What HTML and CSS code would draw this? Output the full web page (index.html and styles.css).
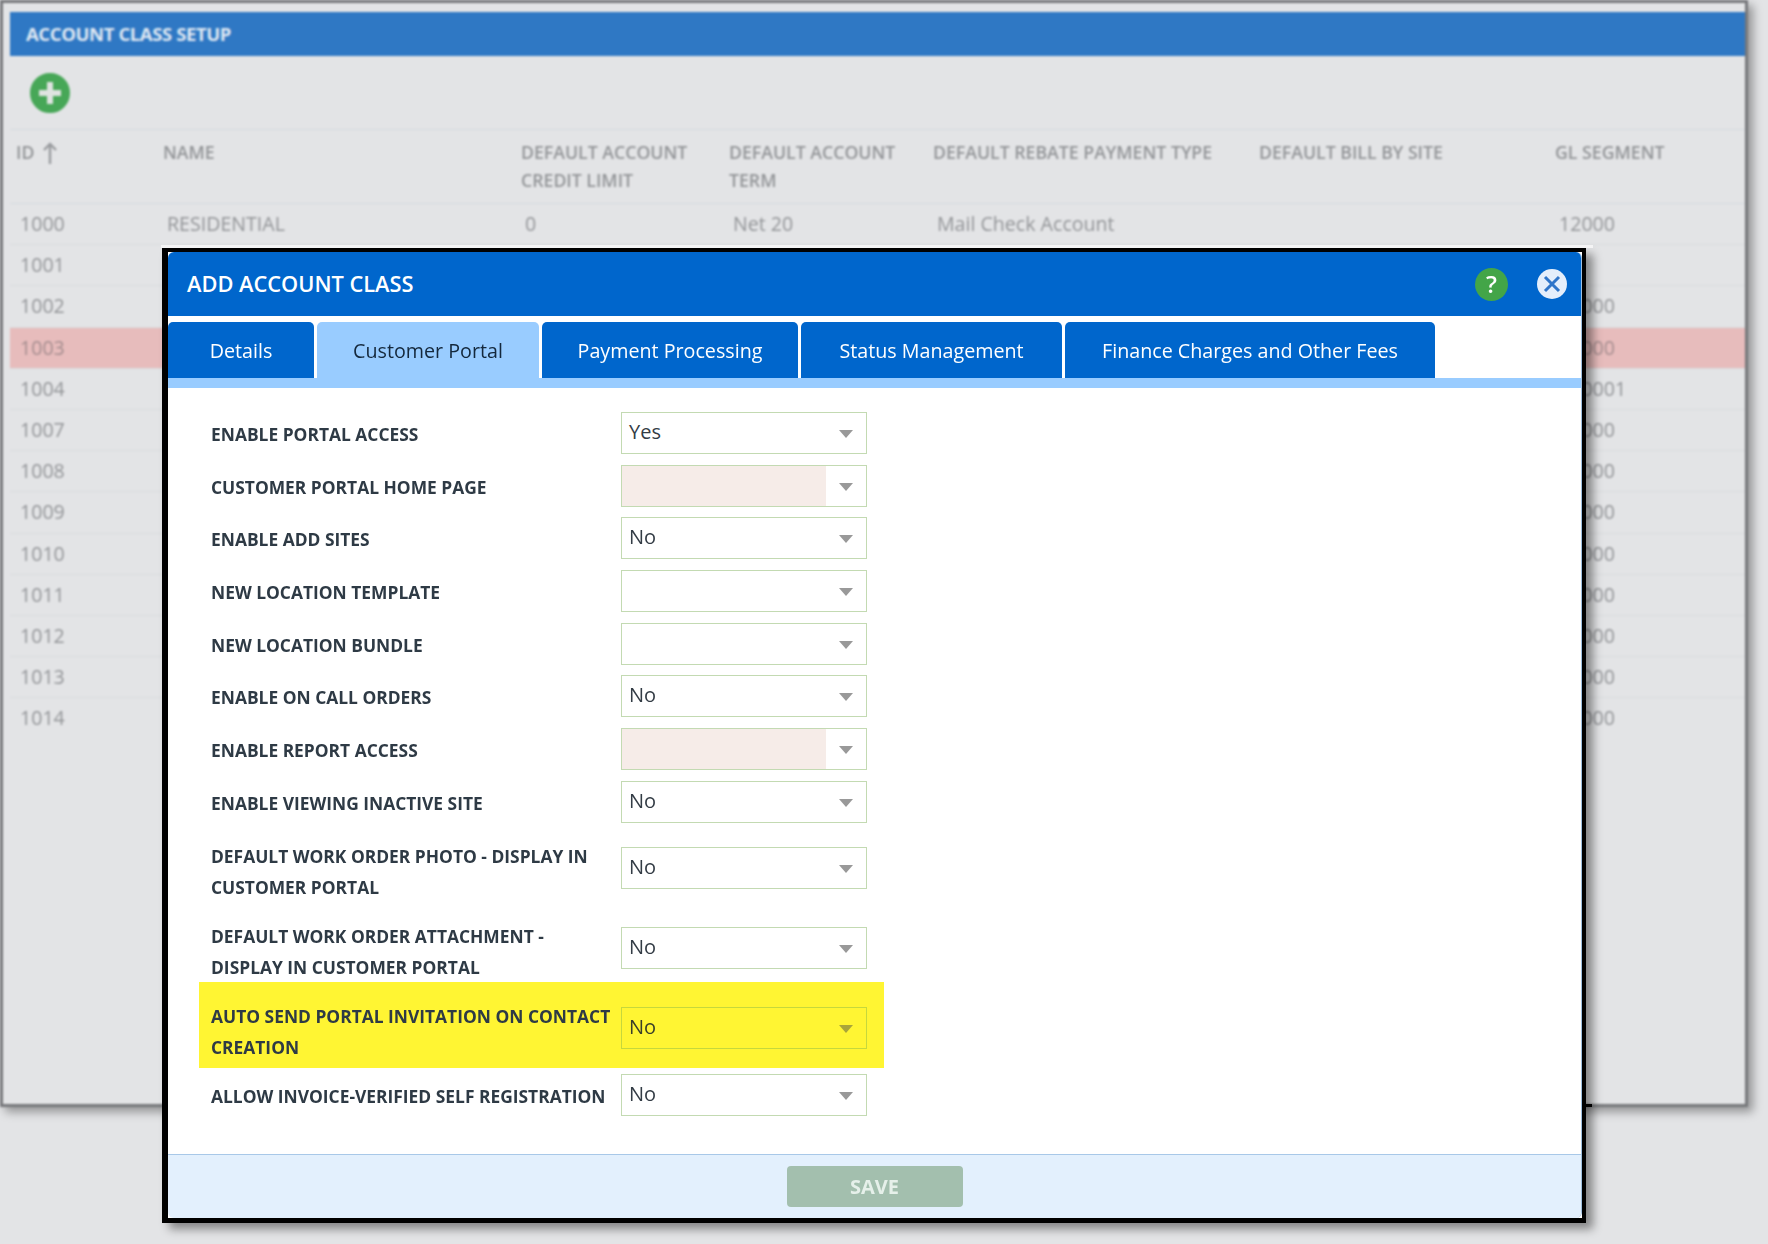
FILE: index.html
```html
<!DOCTYPE html>
<html>
<head>
  <title>Account Class Setup</title>
  <link rel="stylesheet" href="styles.css">
</head>
<body>
  <div class="page">
    <div class="window">
      <div class="window-title">ACCOUNT CLASS SETUP</div>
      <div class="toolbar">
        <svg class="add-icon" width="40" height="40" viewBox="0 0 40 40">
          <circle cx="20" cy="20" r="17" fill="#e3e4e6" stroke="#47a757" stroke-width="6"/>
          <circle cx="20" cy="20" r="15" fill="#47a757"/>
          <path d="M20 9v22M9 20h22" stroke="#dfe3e0" stroke-width="6"/>
        </svg>
      </div>
      <div class="table-row table-head">
        <div class="cell">ID <svg class="sort-icon" width="14" height="22" viewBox="0 0 14 22"><path d="M7 22V3M1 8l6-6 6 6" fill="none" stroke="#9a9c9f" stroke-width="2.4"/></svg></div>
        <div class="cell">NAME</div>
        <div class="cell">DEFAULT ACCOUNT<br>CREDIT LIMIT</div>
        <div class="cell">DEFAULT ACCOUNT<br>TERM</div>
        <div class="cell">DEFAULT REBATE PAYMENT TYPE</div>
        <div class="cell">DEFAULT BILL BY SITE</div>
        <div class="cell">GL SEGMENT</div>
      </div>
      <div class="table-row">
        <div class="cell">1000</div><div class="cell">RESIDENTIAL</div><div class="cell">0</div><div class="cell">Net 20</div><div class="cell">Mail Check Account</div><div class="cell"></div><div class="cell">12000</div>
      </div>
      <div class="table-row"><div class="cell">1001</div><div class="cell"></div><div class="cell"></div><div class="cell"></div><div class="cell"></div><div class="cell"></div><div class="cell"></div></div>
      <div class="table-row"><div class="cell">1002</div><div class="cell"></div><div class="cell"></div><div class="cell"></div><div class="cell"></div><div class="cell"></div><div class="cell">12000</div></div>
      <div class="table-row row-alert"><div class="cell">1003</div><div class="cell"></div><div class="cell"></div><div class="cell"></div><div class="cell"></div><div class="cell"></div><div class="cell">12000</div></div>
      <div class="table-row"><div class="cell">1004</div><div class="cell"></div><div class="cell"></div><div class="cell"></div><div class="cell"></div><div class="cell"></div><div class="cell">120001</div></div>
      <div class="table-row"><div class="cell">1007</div><div class="cell"></div><div class="cell"></div><div class="cell"></div><div class="cell"></div><div class="cell"></div><div class="cell">12000</div></div>
      <div class="table-row"><div class="cell">1008</div><div class="cell"></div><div class="cell"></div><div class="cell"></div><div class="cell"></div><div class="cell"></div><div class="cell">12000</div></div>
      <div class="table-row"><div class="cell">1009</div><div class="cell"></div><div class="cell"></div><div class="cell"></div><div class="cell"></div><div class="cell"></div><div class="cell">12000</div></div>
      <div class="table-row"><div class="cell">1010</div><div class="cell"></div><div class="cell"></div><div class="cell"></div><div class="cell"></div><div class="cell"></div><div class="cell">12000</div></div>
      <div class="table-row"><div class="cell">1011</div><div class="cell"></div><div class="cell"></div><div class="cell"></div><div class="cell"></div><div class="cell"></div><div class="cell">12000</div></div>
      <div class="table-row"><div class="cell">1012</div><div class="cell"></div><div class="cell"></div><div class="cell"></div><div class="cell"></div><div class="cell"></div><div class="cell">12000</div></div>
      <div class="table-row"><div class="cell">1013</div><div class="cell"></div><div class="cell"></div><div class="cell"></div><div class="cell"></div><div class="cell"></div><div class="cell">12000</div></div>
      <div class="table-row row-last"><div class="cell">1014</div><div class="cell"></div><div class="cell"></div><div class="cell"></div><div class="cell"></div><div class="cell"></div><div class="cell">12000</div></div>
    </div>

    <div class="dialog">
      <div class="dialog-inner">
        <div class="dialog-header">
          <div class="dialog-title">ADD ACCOUNT CLASS</div>
          <svg class="help-icon" width="33" height="33" viewBox="0 0 33 33">
            <circle cx="16.5" cy="16.5" r="16.5" fill="#43a548"/>
            <text x="16.5" y="25" text-anchor="middle" class="help-mark">?</text>
          </svg>
          <svg class="close-icon" width="30" height="30" viewBox="0 0 30 30">
            <circle cx="15" cy="15" r="15" fill="#e4eefb"/>
            <path d="M8 8l14 14M22 8L8 22" stroke="#2f75c9" stroke-width="3"/>
          </svg>
        </div>
        <div class="tabs">
          <div class="tab tab-details">Details</div>
          <div class="tab tab-portal active">Customer Portal</div>
          <div class="tab tab-payment">Payment Processing</div>
          <div class="tab tab-status">Status Management</div>
          <div class="tab tab-finance">Finance Charges and Other Fees</div>
        </div>
        <div class="form">
          <div class="form-row">
            <div class="form-label">ENABLE PORTAL ACCESS</div>
            <div class="select">Yes</div>
          </div>
          <div class="form-row">
            <div class="form-label">CUSTOMER PORTAL HOME PAGE</div>
            <div class="select select-empty"></div>
          </div>
          <div class="form-row">
            <div class="form-label">ENABLE ADD SITES</div>
            <div class="select">No</div>
          </div>
          <div class="form-row">
            <div class="form-label">NEW LOCATION TEMPLATE</div>
            <div class="select"></div>
          </div>
          <div class="form-row">
            <div class="form-label">NEW LOCATION BUNDLE</div>
            <div class="select"></div>
          </div>
          <div class="form-row">
            <div class="form-label">ENABLE ON CALL ORDERS</div>
            <div class="select">No</div>
          </div>
          <div class="form-row">
            <div class="form-label">ENABLE REPORT ACCESS</div>
            <div class="select select-empty"></div>
          </div>
          <div class="form-row">
            <div class="form-label">ENABLE VIEWING INACTIVE SITE</div>
            <div class="select">No</div>
          </div>
          <div class="form-row form-row-tall">
            <div class="form-label">DEFAULT WORK ORDER PHOTO - DISPLAY IN CUSTOMER PORTAL</div>
            <div class="select">No</div>
          </div>
          <div class="form-row form-row-tall">
            <div class="form-label">DEFAULT WORK ORDER ATTACHMENT - DISPLAY IN CUSTOMER PORTAL</div>
            <div class="select">No</div>
          </div>
          <div class="form-row form-row-tall highlight">
            <div class="form-label">AUTO SEND PORTAL INVITATION ON CONTACT CREATION</div>
            <div class="select">No</div>
          </div>
          <div class="form-row">
            <div class="form-label">ALLOW INVOICE-VERIFIED SELF REGISTRATION</div>
            <div class="select">No</div>
          </div>
        </div>
        <div class="dialog-footer">
          <div class="save-btn">SAVE</div>
        </div>
      </div>
    </div>
  </div>
</body>
</html>
```

FILE: styles.css
```css
html,
body {
  margin: 0;
  padding: 0;
}

body {
  background-color: #e3e4e6;
  font-family: "Open Sans", "Liberation Sans", sans-serif;
}

.page {
  position: relative;
  width: 1768px;
  height: 1244px;
  overflow: hidden;
}

/* window behind the dialog */
.window {
  box-sizing: border-box;
  width: 1748px;
  height: 1107px;
  padding: 9px 0 0 7px;
  border: solid #77787b;
  border-width: 3px;
  background-color: #e3e4e6;
  box-shadow: 5px 5px 9px rgba(0, 0, 0, 0.35);
  filter: blur(1.1px);
}

.window-title {
  height: 44px;
  padding-left: 16px;
  background-color: #2f78c4;
  color: #dfe8f3;
  font-size: 18.5px;
  font-weight: 700;
  letter-spacing: -0.4px;
  line-height: 44px;
}

.toolbar {
  display: flex;
  align-items: center;
  height: 73px;
  padding-left: 20px;
  border-bottom: 1px solid #d5dae0;
}

.table-row {
  display: grid;
  grid-template-columns: 147px 358px 208px 204px 326px 296px 189px;
  box-sizing: border-box;
  height: 41.2px;
  border-bottom: 1px solid #d9dbde;
  color: #939598;
  font-size: 19.6px;
  line-height: 39px;
}

.table-row .cell {
  padding-left: 10px;
}

.table-head {
  height: 74px;
  padding-top: 8px;
  border-bottom: 1px solid #d5dae0;
  font-size: 17.7px;
  font-weight: 600;
  line-height: 28px;
}

.table-row.table-head .cell {
  padding-left: 6px;
}

.sort-icon {
  vertical-align: -5px;
  margin-left: 4px;
}

.row-alert {
  background-color: #e7bcbc;
  color: #a58d8f;
}

.row-last {
  border-bottom: none;
}

/* dialog */
.dialog {
  position: absolute;
  left: 162px;
  top: 248px;
  box-sizing: border-box;
  width: 1424px;
  height: 975px;
  border: solid #000;
  border-width: 4px 4px 5px 6px;
  background-color: #fff;
  box-shadow: 7px 6px 9px rgba(0, 0, 0, 0.42);
}

.dialog::before {
  content: "";
  position: absolute;
  left: -7px;
  top: -7px;
  width: 1432px;
  height: 3px;
  background-color: #f4f4f5;
}

.dialog::after {
  content: "";
  position: absolute;
  left: 1418px;
  top: 852px;
  width: 6px;
  height: 3px;
  background-color: #000;
}

.dialog-inner {
  display: flex;
  flex-direction: column;
  height: 100%;
  overflow: hidden;
  border-right: 1px solid #9fc0e0;
  border-radius: 6px;
  box-sizing: border-box;
}

.dialog-header {
  display: flex;
  align-items: center;
  flex-shrink: 0;
  height: 64px;
  padding: 0 14px 0 19px;
  background-color: #0066cc;
}

.dialog-title {
  flex: 1;
  margin-top: -2px;
  color: #fff;
  font-size: 21.8px;
  font-weight: 600;
}

.help-icon {
  margin-right: 29px;
}

.help-mark {
  fill: #fff;
  font-family: "Open Sans", sans-serif;
  font-size: 24px;
  font-weight: 600;
}

.tabs {
  display: flex;
  flex-shrink: 0;
  gap: 3px;
  margin-top: 6px;
  border-bottom: 10px solid #99ccff;
}

.tab {
  height: 56px;
  border-radius: 5px 5px 0 0;
  background-color: #0066cc;
  color: #fff;
  font-size: 19.7px;
  font-weight: 500;
  line-height: 58px;
  text-align: center;
}

.tab.active {
  background-color: #99ccff;
  color: #14283c;
}

.tab-details { width: 146px; }
.tab-portal { width: 222px; }
.tab-payment { width: 256px; }
.tab-status { width: 261px; }
.tab-finance { width: 370px; }

.form {
  display: flex;
  flex: 1;
  flex-direction: column;
  gap: 10.7px;
  padding: 24px 0 0 31px;
}

.form-row {
  display: grid;
  grid-template-columns: 410px 246px;
  align-items: center;
  box-sizing: border-box;
  width: 685px;
  min-height: 42px;
  padding-left: 12px;
}

.form-row-tall {
  min-height: 69.3px;
}

.form-label {
  padding-top: 3px;
  color: #2e3a45;
  font-size: 17.4px;
  font-weight: 700;
  line-height: 31px;
}

.form-row-tall .form-label {
  padding-top: 7.3px;
  padding-right: 6px;
}

.select {
  position: relative;
  box-sizing: border-box;
  height: 42px;
  padding-left: 7px;
  border: 1px solid #c3dab2;
  background-color: #fff;
  color: #333c45;
  font-size: 20px;
  line-height: 38px;
}

.select::after {
  content: "";
  position: absolute;
  right: 13px;
  top: 17px;
  border-top: 8px solid #999;
  border-left: 7.5px solid transparent;
  border-right: 7.5px solid transparent;
}

.select-empty {
  background-image: linear-gradient(to right, #f6ece8 204px, #fff 204px);
}

.highlight {
  margin: -11.7px 0 -4px;
  padding-top: 11.7px;
  padding-bottom: 5px;
  min-height: 86px;
  background-color: #fff533;
}

.highlight .select {
  border-color: #c6d83c;
  background-color: #fff533;
  color: #3a3f2a;
}

.highlight .select::after {
  border-top-color: #a9a53a;
}

.dialog-footer {
  display: flex;
  justify-content: center;
  flex-shrink: 0;
  box-sizing: border-box;
  height: 64px;
  padding-top: 11px;
  border-top: 1px solid #a8c8e8;
  background-color: #e3f0fd;
}

.save-btn {
  width: 176px;
  height: 41px;
  border-radius: 4px;
  background-color: #a3bfae;
  color: #e6f0ea;
  font-size: 20px;
  font-weight: 700;
  line-height: 41px;
  text-align: center;
}
```
